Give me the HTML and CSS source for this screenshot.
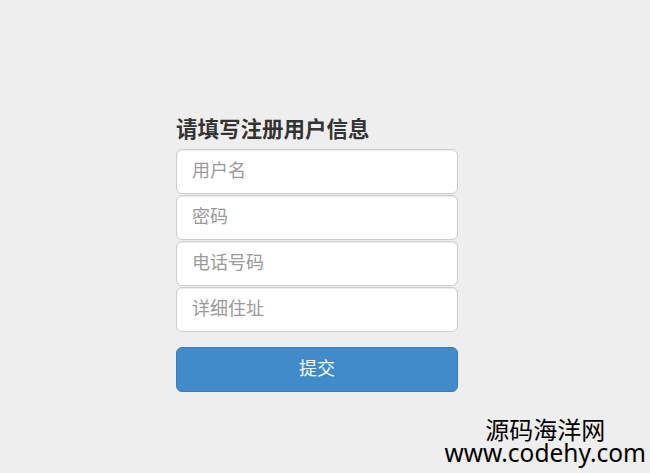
FILE: index.html
```html
<!DOCTYPE html>
<html lang="zh-CN">
<head>
    <meta charset="UTF-8">
    <meta name="viewport" content="width=device-width, initial-scale=1.0">
    <title>注册</title>
    <link rel="stylesheet" href="styles.css">
</head>
<body>
    <div class="wrap">
        <form class="form-signin" onsubmit="return false">
            <h2 class="form-signin-heading">请填写注册用户信息</h2>
            <input type="text" class="form-control" placeholder="用户名">
            <input type="password" class="form-control" placeholder="密码">
            <input type="text" class="form-control" placeholder="电话号码">
            <input type="text" class="form-control" placeholder="详细住址">
            <button class="btn-primary" type="submit">提交</button>
        </form>
    </div>

    <div class="watermark">
        <div class="wm-name">源码海洋网</div>
        <div class="wm-url">www.codehy.com</div>
    </div>
</body>
</html>
```

FILE: styles.css
```css
body {
    margin: 0;
    background-color: #eee;
    font-family: "Liberation Sans", "Noto Sans CJK SC", sans-serif;
    color: #333;
}
.wrap {
    padding: 114px 0 0 176px;
}
.form-signin {
    width: 282px;
    display: flex;
    flex-direction: column;
}
.form-signin-heading {
    margin: 0 0 7px;
    font-size: 21.5px;
    font-weight: bold;
    line-height: 28px;
    font-family: "Noto Sans CJK SC", sans-serif;
    color: #333;
}
.form-control {
    height: 45px;
    margin-bottom: 1px;
    padding: 0 15px 5px;
    border: 1px solid #ccc;
    border-radius: 6px;
    background-color: #fff;
    box-sizing: border-box;
    font-size: 18px;
    font-family: "Noto Sans CJK SC", sans-serif;
    color: #555;
    box-shadow: inset 0 1px 1px rgba(0, 0, 0, 0.075);
}
.form-control::placeholder {
    color: #999;
}
.form-control:focus {
    border-color: #66afe9;
    outline: none;
}
.btn-primary {
    height: 45px;
    margin-top: 14px;
    padding: 0 0 5px;
    border: 1px solid #357ebd;
    border-radius: 6px;
    background-color: #428bca;
    color: #fff;
    font-size: 18px;
    font-family: "Noto Sans CJK SC", sans-serif;
    cursor: pointer;
}
.watermark {
    position: absolute;
    right: 4px;
    bottom: 7px;
    text-align: center;
    color: #000;
}
.wm-name {
    font-size: 24px;
    line-height: 22px;
    font-family: "Noto Sans CJK SC", sans-serif;
}
.wm-url {
    font-size: 24.5px;
    line-height: 26px;
    font-family: "Noto Sans", "Liberation Sans", sans-serif;
}
```
